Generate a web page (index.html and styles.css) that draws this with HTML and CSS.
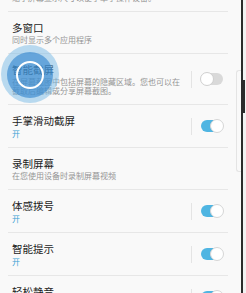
FILE: index.html
```html
<!DOCTYPE html>
<html lang="zh-CN">

<head>
  <meta charset="UTF-8" />
  <meta name="viewport" content="width=device-width, initial-scale=1.0" />
  <title>高级功能</title>
  <link rel="stylesheet" href="styles.css">
</head>

<body>
  <div class="device">
    <div class="screen">
      <ul class="settings">
        <li class="row">
          <div class="text">
            <p class="title">单手操作模式</p>
            <p class="sub">缩小屏幕显示尺寸以便于单手操作设备。</p>
          </div>
        </li>
        <li class="row">
          <div class="text">
            <p class="title">多窗口</p>
            <p class="sub">同时显示多个应用程序</p>
          </div>
        </li>
        <li class="row">
          <div class="text">
            <p class="title">智能截屏</p>
            <p class="sub">在屏幕截图中包括屏幕的隐藏区域。您也可以在截取后编辑或分享屏幕截图。</p>
          </div>
          <span class="divider"></span>
          <span class="switch"></span>
        </li>
        <li class="row">
          <div class="text">
            <p class="title">手掌滑动截屏</p>
            <p class="sub on">开</p>
          </div>
          <span class="divider"></span>
          <span class="switch checked"></span>
        </li>
        <li class="row">
          <div class="text">
            <p class="title">录制屏幕</p>
            <p class="sub">在您使用设备时录制屏幕视频</p>
          </div>
        </li>
        <li class="row">
          <div class="text">
            <p class="title">体感拨号</p>
            <p class="sub on">开</p>
          </div>
          <span class="divider"></span>
          <span class="switch checked"></span>
        </li>
        <li class="row">
          <div class="text">
            <p class="title">智能提示</p>
            <p class="sub on">开</p>
          </div>
          <span class="divider"></span>
          <span class="switch checked"></span>
        </li>
        <li class="row">
          <div class="text">
            <p class="title">轻松静音</p>
            <p class="sub on">开</p>
          </div>
          <span class="divider"></span>
          <span class="switch checked"></span>
        </li>
      </ul>
      <!-- 触摸点 -->
      <div class="touch"><span class="ring"></span></div>
      <div class="edge-handle"></div>
    </div>
    <div class="frame"><span class="side-key"></span></div>
    <div class="outside"></div>
  </div>
</body>

</html>
```

FILE: styles.css
```css
* {
  margin: 0;
  padding: 0;
}

ul,
li {
  list-style: none;
}

body {
  background-color: #f0f0f0;
  font-family: "Noto Sans CJK SC", "Noto Sans", sans-serif;
}

.device {
  display: flex;
  height: 293px;
  overflow: hidden;
}

.screen {
  position: relative;
  width: 241px;
  height: 293px;
  overflow: hidden;
  background-color: #f9f9f9;
}

.settings {
  margin: -30px 13px 0 8px;
}

.row {
  display: flex;
  align-items: center;
  padding: 9px 5px 9px 4px;
  border-bottom: 1px solid #e7e7e7;
}

.text {
  flex: 1;
  min-width: 0;
}

.title {
  font-size: 10.5px;
  line-height: 13px;
  color: #1c1c1c;
}

.sub {
  margin-top: 1px;
  font-size: 8px;
  line-height: 9px;
  color: #959595;
}

.sub.on {
  margin-top: 2px;
  color: #3a9fd3;
}

.divider {
  width: 1px;
  height: 17px;
  margin: 0 9px 0 8px;
  background-color: #e4e4e4;
}

/* 开关 */
.switch {
  position: relative;
  width: 22px;
  height: 12px;
  border-radius: 6px;
  background-color: #d9d9d9;
}

.switch::after {
  content: "";
  position: absolute;
  left: -1px;
  top: -1px;
  width: 12px;
  height: 12px;
  border-radius: 50%;
  background-color: #fff;
  border: 1px solid #cfcfcf;
}

.switch.checked {
  background-color: #4fb5e2;
}

.switch.checked::after {
  left: auto;
  right: -1px;
  border-color: #d6d6d6;
}

/* 触摸点 */
.touch {
  position: absolute;
  left: 1px;
  top: 45px;
  width: 58px;
  height: 58px;
  border-radius: 50%;
  background-color: rgba(120, 185, 230, 0.5);
  display: flex;
  align-items: center;
  justify-content: center;
}

.touch::before {
  content: "";
  position: absolute;
  left: 6px;
  top: 7px;
  width: 46px;
  height: 46px;
  border-radius: 50%;
  background-color: rgba(45, 130, 205, 0.6);
}

.ring {
  position: relative;
  width: 24px;
  height: 24px;
  margin-top: 2px;
  border: 2px solid #fff;
  border-radius: 50%;
}

.edge-handle {
  position: absolute;
  left: 236px;
  top: 70px;
  width: 8px;
  height: 100px;
  border: 1px solid #e4e4e4;
  border-right: none;
  border-radius: 3px 0 0 3px;
}

.frame {
  position: relative;
  width: 2px;
  background-color: #2b2b2b;
}

.side-key {
  position: absolute;
  left: 2px;
  top: 80px;
  width: 2px;
  height: 33px;
  background-color: #2b2b2b;
}

.outside {
  flex: 1;
  background-color: #f2f2f2;
}
```
